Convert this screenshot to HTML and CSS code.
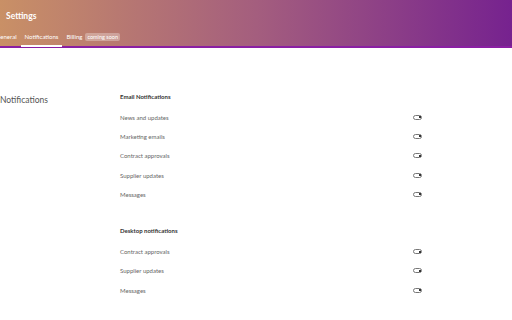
FILE: index.html
```html
<!DOCTYPE html>
<html lang="en">
  <head>
    <meta charset="UTF-8" />
    <meta name="viewport" content="width=device-width, initial-scale=1.0" />
    <title>Settings</title>
    <link rel="stylesheet" href="styles.css">
  </head>
  <body>
    <header class="header">
      <h1 class="title">Settings</h1>
      <nav class="tabs">
        <a class="tab">General</a>
        <a class="tab active">Notifications</a>
        <a class="tab">Billing</a>
        <span class="badge">coming soon</span>
      </nav>
    </header>
    <main class="content">
      <h2 class="side-title">Notifications</h2>
      <div class="groups">
        <section class="group">
          <h3 class="group-title">Email Notifications</h3>
          <div class="row"><span>News and updates</span><span class="switch"></span></div>
          <div class="row"><span>Marketing emails</span><span class="switch"></span></div>
          <div class="row"><span>Contract approvals</span><span class="switch"></span></div>
          <div class="row"><span>Supplier updates</span><span class="switch"></span></div>
          <div class="row"><span>Messages</span><span class="switch"></span></div>
        </section>
        <section class="group">
          <h3 class="group-title">Desktop notifications</h3>
          <div class="row"><span>Contract approvals</span><span class="switch"></span></div>
          <div class="row"><span>Supplier updates</span><span class="switch"></span></div>
          <div class="row"><span>Messages</span><span class="switch"></span></div>
        </section>
      </div>
    </main>
  </body>
</html>
```

FILE: styles.css
```css
* {
  box-sizing: border-box;
}
body {
  margin: 0;
  font-family: Lato, "Open Sans", sans-serif;
  background-color: #fff;
  color: #333;
}
.header {
  height: 48px;
  padding: 10px 0 0 6px;
  background: linear-gradient(90deg, #c99066 0%, #a45e7e 50%, #76228f 100%);
  border-bottom: 2px solid #8a1fa3;
}
.title {
  margin: 0;
  font-size: 8.5px;
  font-weight: 700;
  color: #fff;
  line-height: 12px;
}
.tabs {
  display: flex;
  align-items: center;
  margin: 10px 0 0 -14px;
}
.tab {
  padding: 0 4px 4px;
  font-size: 6px;
  color: #fff;
  border-bottom: 2px solid transparent;
  line-height: 9px;
}
.tab.active {
  border-bottom-color: #fff;
}
.badge {
  margin: 0 0 6px -1px;
  padding: 1px 2px;
  font-size: 5.5px;
  color: #fff;
  background-color: rgba(255, 255, 255, 0.3);
  border-radius: 2px;
}
.content {
  display: flex;
  padding-top: 44px;
}
.side-title {
  width: 120px;
  margin: 3px 0 0;
  font-size: 8.5px;
  font-weight: 400;
  color: #555;
}
.groups {
  width: 302px;
}
.group {
  margin-bottom: 22.5px;
}
.group-title {
  margin: 0 0 5.5px;
  font-size: 6px;
  font-weight: 700;
  color: #333;
  line-height: 10px;
}
.row {
  display: flex;
  justify-content: space-between;
  align-items: center;
  height: 19.3px;
  font-size: 6px;
  color: #666;
}
.switch {
  position: relative;
  width: 9px;
  height: 5px;
  border: 1px solid #777;
  border-radius: 3px;
}
.switch::after {
  content: "";
  position: absolute;
  top: 0.5px;
  right: 0.5px;
  width: 2px;
  height: 2px;
  background-color: #333;
}
```
